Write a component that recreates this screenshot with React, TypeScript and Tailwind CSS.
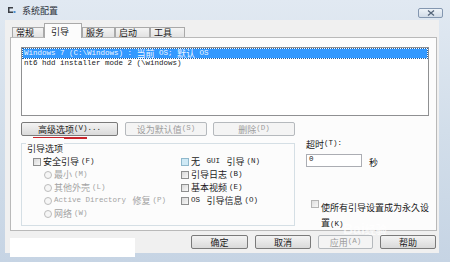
import React from "react";

// splits a label into latin (SimSun-like mono) and CJK runs
function T({ s }: { s: string }) {
  const parts = s.split(/([\x20-\x7E]+)/).filter(Boolean);
  return (
    <>
      {parts.map((p, i) =>
        /^[\x20-\x7E]+$/.test(p) ? (
          <span key={i} className="whitespace-pre font-['Liberation_Mono',monospace] text-[7.5px]">
            {p}
          </span>
        ) : (
          <span key={i} className="font-['Noto_Sans_CJK_SC',sans-serif] text-[9px]">
            {p}
          </span>
        )
      )}
    </>
  );
}

function Button({ label, disabled, w }: { label: string; disabled?: boolean; w: string }) {
  return (
    <div
      className={
        disabled
          ? `flex h-[14px] ${w} items-center justify-center rounded-[2px] border border-[#b5b9bd] bg-[#f4f4f4] leading-none text-[#9c9c9c]`
          : `flex h-[14px] ${w} items-center justify-center rounded-[2px] border border-[#7a7a7a] bg-gradient-to-b from-[#f3f3f3] to-[#dadada] leading-none text-[#1a1a1a]`
      }
    >
      <T s={label} />
    </div>
  );
}

function Check({ label, blue }: { label: string; blue?: boolean }) {
  return (
    <div className="flex h-[13px] items-center gap-[2px] leading-none text-[#1a1a1a]">
      <div
        className={
          blue
            ? "h-[8px] w-[8px] border border-[#8fb8cc] bg-[#cfe9f5]"
            : "h-[8px] w-[8px] border border-[#8e8f8f] bg-gradient-to-br from-[#d8d8d8] to-[#f8f8f8]"
        }
      />
      <T s={label} />
    </div>
  );
}

function Radio({ label }: { label: string }) {
  return (
    <div className="flex h-[13px] items-center gap-[2px] leading-none text-[#a3a3a3]">
      <div className="h-[8px] w-[8px] rounded-full border border-[#bcbcbc] bg-[#f6f6f6]" />
      <T s={label} />
    </div>
  );
}

const tabs = [
  { name: "常规", w: "w-[32px]" },
  { name: "引导", w: "w-[38px]", active: true },
  { name: "服务", w: "w-[33px]" },
  { name: "启动", w: "w-[35px]" },
  { name: "工具", w: "w-[35px]" },
];

export default function App() {
  return (
    <div className="relative flex h-[262px] w-[450px] flex-col overflow-hidden bg-gradient-to-b from-[#e1e9f2] via-[#d2deea] to-[#c6d4e4]">
      {/* title bar */}
      <div className="flex h-[20px] items-center pl-[7px] pr-[7px]">
        <svg width="9" height="8" viewBox="0 0 9 8">
          <path d="M1 1h5v1.5H2.5v3H6V7H1z" fill="#3b3f45" />
          <rect x="6.5" y="5" width="2" height="2" fill="#4a8fd0" />
        </svg>
        <span className="ml-[6px] font-['Noto_Sans_CJK_SC',sans-serif] text-[9px] leading-none text-[#2a2f38]">
          系统配置
        </span>
        <div className="ml-auto mt-[6px] flex h-[10px] w-[25px] items-center justify-center rounded-[2px] border border-[#8497b0] bg-gradient-to-b from-[#eef3f8] to-[#d2dce8]">
          <svg width="8" height="6" viewBox="0 0 8 6">
            <path d="M1 0.5L7 5.5M7 0.5L1 5.5" stroke="#55657a" strokeWidth="1.3" />
          </svg>
        </div>
      </div>

      {/* dialog body */}
      <div className="flex flex-1 pb-[9px] pl-[5px] pr-[11px]">
        <div className="flex flex-1 flex-col bg-[#f0f0f0] pl-[5px] pr-[2px] pt-[4px]">
          {/* tabs */}
          <div className="flex h-[13px] items-end pl-[2px]">
            {tabs.map((t) =>
              t.active ? (
                <div
                  key={t.name}
                  className={`relative z-10 -mb-px flex h-[15px] ${t.w} items-center border border-b-0 border-[#a9a9a9] bg-[#fcfcfc] pl-[6px] leading-none text-[#1a1a1a]`}
                >
                  <T s={t.name} />
                </div>
              ) : (
                <div
                  key={t.name}
                  className={`flex h-[10px] ${t.w} items-center border border-b-0 border-[#a9a9a9] bg-gradient-to-b from-[#f4f4f4] to-[#e2e2e2] pl-[3px] leading-none text-[#1a1a1a]`}
                >
                  <T s={t.name} />
                </div>
              )
            )}
          </div>

          {/* tab panel */}
          <div className="flex h-[194px] flex-col border border-[#b9b9b9] bg-[#fcfcfc] pl-[10px] pr-[7px] pt-[9px]">
            {/* boot list */}
            <div className="h-[70px] border border-[#8f9092] bg-white p-px">
              <div className="flex h-[9px] items-center bg-[#3399ff] pl-[1px] leading-none text-[#eef6ff] outline-1 outline-dotted outline-[#1c5fa8]">
                <T s="Windows 7 (C:\Windows) : 当前 OS; 默认 OS" />
              </div>
              <div className="mt-[1px] flex h-[9px] items-center pl-[1px] leading-none text-[#1a1a1a]">
                <T s="nt6 hdd installer mode 2 (\windows)" />
              </div>
            </div>

            {/* list buttons */}
            <div className="mt-[6px] flex">
              <div className="relative">
                <Button label="高级选项(V)..." w="w-[97px]" />
                <div className="absolute left-[12px] top-[15px] h-[2px] w-[54px] bg-[#c8262c]" />
              </div>
              <div className="ml-[7px]">
                <Button label="设为默认值(S)" disabled w="w-[82px]" />
              </div>
              <div className="ml-[6px]">
                <Button label="删除(D)" disabled w="w-[82px]" />
              </div>
            </div>

            <div className="flex">
              {/* boot options group */}
              <div className="relative mt-[7px] flex h-[83px] w-[274px] border border-[#d5dfe5] pl-[11px] pt-[11px]">
                <div className="absolute -top-[6px] left-[4px] bg-[#fcfcfc] px-[1px] leading-none text-[#1a1a1a]">
                  <T s="引导选项" />
                </div>
                <div className="flex w-[148px] flex-col">
                  <Check label="安全引导(F)" />
                  <div className="flex flex-col pl-[11px]">
                    <Radio label="最小(M)" />
                    <Radio label="其他外壳(L)" />
                    <Radio label="Active Directory 修复(P)" />
                    <Radio label="网络(W)" />
                  </div>
                </div>
                <div className="flex flex-col">
                  <Check label="无 GUI 引导(N)" blue />
                  <Check label="引导日志(B)" />
                  <Check label="基本视频(E)" />
                  <Check label="OS 引导信息(O)" />
                </div>
              </div>

              {/* timeout + permanent */}
              <div className="ml-[11px] flex flex-col pt-[3px]">
                <div className="flex h-[10px] items-center leading-none text-[#1a1a1a]">
                  <T s="超时(T):" />
                </div>
                <div className="mt-[3px] flex items-center">
                  <div className="flex h-[13px] w-[56px] items-center border border-[#abadb3] bg-white pl-[2px] leading-none text-[#1a1a1a]">
                    <T s="0" />
                  </div>
                  <div className="ml-[7px] leading-none text-[#1a1a1a]">
                    <T s="秒" />
                  </div>
                </div>
                <div className="mt-[31px] flex items-start gap-[2px] pl-[5px]">
                  <div className="mt-[1px] h-[8px] w-[8px] border border-[#b5b5b5] bg-gradient-to-br from-[#e0e0e0] to-[#f8f8f8]" />
                  <div className="leading-[12px] text-[#1a1a1a]">
                    <T s="使所有引导设置成为永久设" />
                    <br />
                    <T s="置(K)" />
                  </div>
                </div>
              </div>
            </div>
          </div>

          {/* dialog buttons */}
          <div className="flex h-[22px] items-start justify-end gap-[7px] pr-[1px] pt-[4px]">
            <Button label="确定" w="w-[57px]" />
            <Button label="取消" w="w-[56px]" />
            <Button label="应用(A)" disabled w="w-[55px]" />
            <Button label="帮助" w="w-[56px]" />
          </div>
        </div>
      </div>

      {/* erased patch + watermark */}
      <div className="absolute left-[10px] top-[238px] h-[19px] w-[125px] bg-white" />
      <div className="absolute left-[343px] top-[222px] font-['Liberation_Sans',sans-serif] text-[14px] font-bold leading-none text-white/70">
        Bai<span className="font-['Noto_Sans_CJK_SC',sans-serif] text-[11px]">经验</span>
      </div>
    </div>
  );
}
